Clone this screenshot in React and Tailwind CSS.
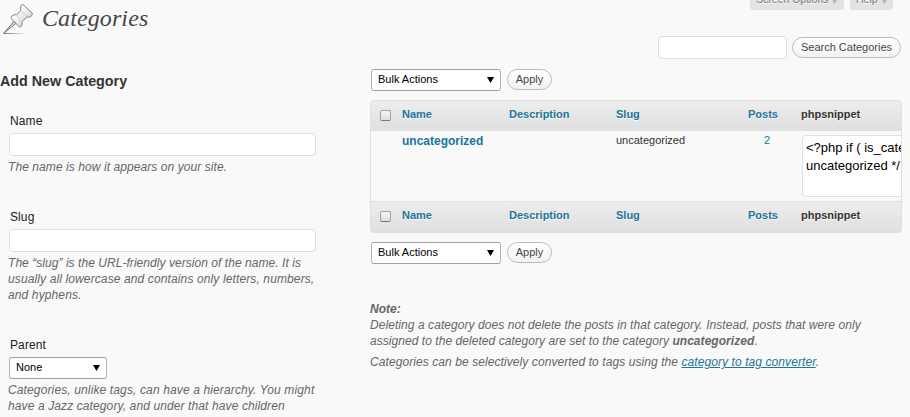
const COLS = 'grid grid-cols-[31px_107px_107px_124px_61px_1fr]';
const EMBOSS = '[text-shadow:0_1px_0_rgba(255,255,255,0.8)]';

function PinIcon() {
  return (
    <svg width="36" height="36" viewBox="0 0 36 36" className="block">
      <defs>
        <linearGradient id="pin" x1="0" y1="0" x2="1" y2="1">
          <stop offset="0" stopColor="#d4d4d4" />
          <stop offset="0.35" stopColor="#fafafa" />
          <stop offset="0.65" stopColor="#dedede" />
          <stop offset="1" stopColor="#b0b0b0" />
        </linearGradient>
        <linearGradient id="shade" gradientUnits="userSpaceOnUse" x1="4" y1="0" x2="28" y2="0">
          <stop offset="0" stopColor="#777777" />
          <stop offset="1" stopColor="#888888" stopOpacity="0" />
        </linearGradient>
      </defs>
      <rect x="4" y="33" width="24" height="1" fill="url(#shade)" />
      <path d="M13.8 21.6L3.6 33.3L15.8 23.6Z" fill="#d9d9d9" stroke="#777777" strokeWidth="1" strokeLinejoin="round" />
      <path
        d="M20.4 7.2Q20.8 5 23 4.5L32.4 13.4Q32.4 15.8 30.4 16.8Q28.6 17.4 27 17L22.2 21.6Q22.6 25.2 20.6 27Q19.8 27.3 19 26.7L11.4 18.6Q10.8 16.8 12.4 15.4Q14.4 14.4 16.8 14.8L20.9 10.2Q20 8.8 20.4 7.2Z"
        fill="url(#pin)" stroke="#858585" strokeWidth="1" strokeLinejoin="round"
      />
      <path d="M21.6 10.4Q23.6 14.6 27 16.4M17 15.4Q18.8 19.4 21.8 21" fill="none" stroke="#cfcfcf" strokeWidth="0.8" />
    </svg>
  );
}

function Arrow({ className }) {
  return (
    <svg width="7" height="6" viewBox="0 0 7 6" className={className}>
      <path d="M0 0H7L3.5 6Z" fill="currentColor" />
    </svg>
  );
}

function Tab({ label, className }) {
  return (
    <div className={`flex h-[22px] items-start rounded-b-[3px] bg-[#e3e3e3] pl-[6px] text-[10.5px] leading-[22px] text-[#777777] ${className}`}>
      <span className={EMBOSS}>{label}</span>
      <Arrow className="mt-[10px] ml-[3px] shrink-0 text-[#b5b5b5]" />
    </div>
  );
}

function Button({ children, className }) {
  return (
    <button className={`rounded-full border border-[#bbbbbb] bg-linear-to-b from-white to-[#f2f2f2] text-[11px] leading-[13px] text-[#464646] ${EMBOSS} ${className}`}>
      {children}
    </button>
  );
}

function Select({ label, className }) {
  return (
    <div className={`flex h-[22px] items-center justify-between rounded-[3px] border border-[#b4b4b4] border-y-[#a0a0a0] bg-white pr-[6px] pl-[6px] text-[11px] text-black ${className}`}>
      <span className="pb-[2px] leading-[18px]">{label}</span>
      <Arrow />
    </div>
  );
}

function BulkActions() {
  return (
    <div className="flex gap-[6px] pl-px">
      <Select label="Bulk Actions" className="w-[130px]" />
      <Button className="h-[21px] w-[45px]">Apply</Button>
    </div>
  );
}

function HeaderCells() {
  return (
    <>
      <div className="pt-[9px] pl-[9px]">
        <div className="h-[11px] w-[11px] rounded-[2px] border border-[#a0a0a0] border-b-[#777777] bg-linear-to-b from-[#f6f6f6] to-[#dddddd]" />
      </div>
      <span>Name</span>
      <span>Description</span>
      <span>Slug</span>
      <span className="pl-[8px]">Posts</span>
      <span className="text-[#333333]">phpsnippet</span>
    </>
  );
}

function Field({ label, hint, children }) {
  return (
    <div>
      <div className="pl-[10px] text-xs leading-[16px] tracking-[0.1px] text-[#222222]">{label}</div>
      {children}
      <p className="pl-[8px] text-xs leading-[16px] text-[#666666] italic">{hint}</p>
    </div>
  );
}

function TextInput() {
  return <input className="mt-[4px] mb-[3px] ml-[9px] block h-[23px] w-[307px] rounded-[4px] border border-[#dfdfdf] bg-white" />;
}

export default function App() {
  return (
    <div className="flex h-[417px] w-[910px] overflow-hidden bg-[#f9f9f9] font-['Liberation_Sans',Arial,sans-serif] whitespace-nowrap">
      <div className="w-[370px] shrink-0">
        <div className="flex h-[36px]">
          <PinIcon />
          <h1 className="pl-[6px] font-['Liberation_Serif',serif] text-[24px] leading-[36px] tracking-[0.1px] text-[#464646] italic">Categories</h1>
        </div>
        <h3 className="mt-[37px] text-[14.3px] leading-[16px] font-bold text-[#333333]">Add New Category</h3>
        <div className="mt-[24px] flex flex-col gap-[34px]">
          <Field label="Name" hint={<span className="tracking-[0.075px]">The name is how it appears on your site.</span>}>
            <TextInput />
          </Field>
          <Field
            label="Slug"
            hint={
              <>
                <span className="block tracking-[0.05px]">The “slug” is the URL-friendly version of the name. It is</span>
                <span className="block tracking-[0.12px]">usually all lowercase and contains only letters, numbers,</span>
                <span className="block tracking-[0.12px]">and hyphens.</span>
              </>
            }
          >
            <TextInput />
          </Field>
          <Field
            label="Parent"
            hint={
              <>
                <span className="block tracking-[0.13px]">Categories, unlike tags, can have a hierarchy. You might</span>
                <span className="block tracking-[0.11px]">have a Jazz category, and under that have children</span>
              </>
            }
          >
            <Select label="None" className="mt-[4px] mb-[3px] ml-[9px] w-[98px]" />
          </Field>
        </div>
      </div>

      <div className="w-[532px] shrink-0">
        <div className="flex h-[10px] items-end justify-end gap-[6px] pr-[9px]">
          <Tab label="Screen Options" className="w-[94px]" />
          <Tab label="Help" className="w-[43px]" />
        </div>
        <div className="mt-[26px] flex justify-end gap-[5px] pr-px">
          <input className="h-[23px] w-[129px] rounded-[4px] border border-[#dfdfdf] bg-white" />
          <Button className="mt-px h-[21px] w-[109px]">Search Categories</Button>
        </div>
        <div className="mt-[10px]">
          <BulkActions />
        </div>
        <div className="mt-[9px] h-[133px] overflow-hidden rounded-[4px] border border-[#dfdfdf] bg-[#f9f9f9]">
          <div className={`${COLS} h-[30px] bg-linear-to-b from-[#ededed] to-[#dfdfdf] text-[11px] leading-[27px] font-bold text-[#21759b] ${EMBOSS}`}>
            <HeaderCells />
          </div>
          <div className={`${COLS} h-[70px] text-[11px] leading-[19px] text-[#333333]`}>
            <span />
            <a className="text-xs leading-[20px] font-bold text-[#21759b]">uncategorized</a>
            <span />
            <span>uncategorized</span>
            <a className="pl-[24px] text-[#21759b]">2</a>
            <div className="min-w-0">
              <div className="mt-[4px] ml-px h-[62px] w-[180px] rounded-[4px] border border-[#dfdfdf] bg-white pt-[3px] pl-[3px] text-[13px] leading-[18px] text-black">
                &lt;?php if ( is_category<br />uncategorized */
              </div>
            </div>
          </div>
          <div className={`${COLS} h-[31px] border-t border-[#dfdfdf] bg-linear-to-b from-[#ededed] to-[#dfdfdf] text-[11px] leading-[27px] font-bold text-[#21759b] ${EMBOSS}`}>
            <HeaderCells />
          </div>
        </div>
        <div className="mt-[9px]">
          <BulkActions />
        </div>
        <div className="mt-[37px] text-xs leading-[16px] text-[#666666] italic">
          <p><strong>Note:</strong></p>
          <p className="tracking-[0.065px]">Deleting a category does not delete the posts in that category. Instead, posts that were only</p>
          <p className="tracking-[0.05px]">assigned to the deleted category are set to the category <strong>uncategorized</strong>.</p>
          <p className="mt-[5px] tracking-[0.08px]">
            Categories can be selectively converted to tags using the <a className="text-[#21759b] underline">category to tag converter</a>.
          </p>
        </div>
      </div>
    </div>
  );
}
